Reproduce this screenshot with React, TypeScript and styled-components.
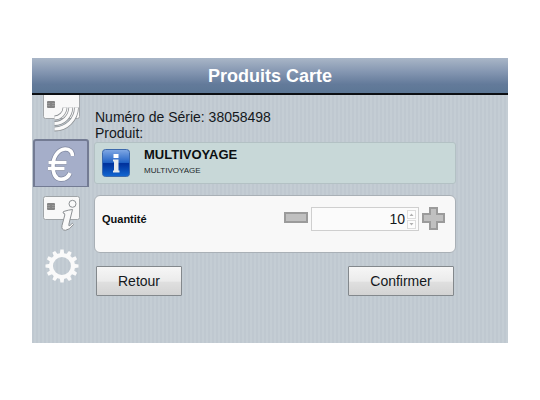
import React, { useState } from "react";
import styled, { createGlobalStyle } from "styled-components";

const GlobalStyle = createGlobalStyle`
  *, *::before, *::after { box-sizing: border-box; }
  body {
    margin: 0;
    background: #ffffff;
    color: #14181c;
    font-family: "Liberation Sans", Arial, sans-serif;
    font-size: 14px;
  }
  button, input { font: inherit; color: inherit; }
`;

const Screen = styled.div`
  margin: 58px 32px;
  background: repeating-linear-gradient(90deg, #bfc8d0 0 2px, #c4cdd4 2px 4px);
`;

const Header = styled.header`
  display: flex;
  align-items: center;
  justify-content: center;
  height: 37px;
  border-bottom: 2px solid #0b0e12;
  background: linear-gradient(#a9b6c7, #8496b1 40%, #637a9a 75%, #5c7795);
`;

const Title = styled.h1`
  margin: 0;
  color: #ffffff;
  font-size: 18px;
  line-height: 20px;
  font-weight: bold;
`;

const Body = styled.div`
  display: flex;
  min-height: 248px;
`;

const Sidebar = styled.nav`
  flex: none;
  width: 58px;
  display: flex;
  flex-direction: column;
`;

const Tab = styled.button<{ $active?: boolean; $height: number }>`
  display: flex;
  flex: none;
  align-items: center;
  justify-content: center;
  width: 56px;
  height: ${(p) => p.$height}px;
  margin: 0 0 0 1px;
  padding: 0 0 0 ${(p) => (p.$active ? 0 : 2)}px;
  border: ${(p) => (p.$active ? "2px solid #737b93" : "0")};
  border-bottom-width: ${(p) => (p.$active ? 1 : 0)}px;
  border-radius: 3px 3px 0 0;
  background: ${(p) => (p.$active ? "#a5aec9" : "transparent")};
`;

const Content = styled.main`
  flex: 1;
  min-width: 0;
  padding: 14px 52px 46px 4px;
`;

const Info = styled.p`
  margin: 0 0 0 1px;
  font-size: 14px;
  line-height: 16px;
`;

const Product = styled.section`
  display: flex;
  align-items: center;
  gap: 14px;
  height: 42px;
  margin-top: 1px;
  padding: 0 7px;
  border: 1px solid #b3c1c4;
  border-radius: 3px;
  background: #c8d8d8;
`;

const ProductName = styled.h2`
  margin: 0;
  color: #0c0f11;
  font-size: 13px;
  line-height: 16px;
  font-weight: bold;
`;

const ProductDetail = styled.p`
  margin: 0;
  color: #22282b;
  font-size: 8px;
  line-height: 16px;
`;

const QuantityCard = styled.section`
  display: flex;
  align-items: center;
  justify-content: space-between;
  height: 58px;
  margin-top: 11px;
  padding: 0 9px 10px 7px;
  border: 1px solid #a9b0b6;
  border-radius: 6px;
  background: #f8f8f8;
`;

const QuantityLabel = styled.label`
  color: #0c0f11;
  font-size: 11px;
  font-weight: bold;
`;

const Stepper = styled.div`
  display: flex;
  align-items: center;
  gap: 3px;
`;

const StepButton = styled.button`
  display: flex;
  padding: 0;
  border: 0;
  background: none;
`;

const Field = styled.div`
  display: flex;
  align-items: center;
  width: 108px;
  height: 24px;
  padding: 0 2px 0 0;
  border: 1px solid #cfcfcf;
  background: #fbfbfb;
`;

const QuantityInput = styled.input`
  flex: 1;
  min-width: 0;
  padding: 0 2px 0 0;
  border: 0;
  outline: 0;
  background: none;
  text-align: right;
  font-size: 14px;
  line-height: 20px;
`;

const Spinner = styled.div`
  display: flex;
  flex-direction: column;
  gap: 1px;
`;

const SpinButton = styled.button`
  display: flex;
  align-items: center;
  justify-content: center;
  width: 9px;
  height: 9px;
  padding: 0;
  border: 1px solid #dddddd;
  background: #fdfdfd;
`;

const Actions = styled.div`
  display: flex;
  justify-content: space-between;
  margin-top: 13px;
  padding: 0 2px;
`;

const ActionButton = styled.button<{ $wide?: boolean }>`
  width: ${(p) => (p.$wide ? 106 : 86)}px;
  height: 30px;
  padding: 0;
  border: 1px solid #83888c;
  border-radius: 1px;
  background: linear-gradient(#f6f6f6, #ebebeb 50%, #dfdfdf 55%, #d3d3d3);
  font-size: 14px;
`;

const Chip = ({ y }: { y: number }) => (
  <g>
    <rect x="4" y={y} width="8" height="7" rx="1" fill="#858585" />
    <path d={`M4 ${y + 2.5}h3M4 ${y + 4.5}h3M9 ${y + 2.5}h3M9 ${y + 4.5}h3`} stroke="#a5a5a5" strokeWidth="0.6" />
  </g>
);

const arcs = "M22 12.500A11 11 0 0 1 11.500 23M27.800 12.500A16.500 16.500 0 0 1 11.500 28.500M33.500 12.500A22 22 0 0 1 11.500 34";

const ContactlessIcon = () => (
  <svg width="38" height="44" viewBox="0 0 38 44" aria-hidden="true">
    <path d="M.5 0V21.500Q.5 23.500 2.500 23.500H34.500Q36.500 23.500 36.500 21.500V0" fill="#f8f8f8" stroke="#a2a6a9" />
    <Chip y={6} />
    <path d={arcs} fill="none" stroke="#8d9194" strokeWidth="4.8" />
    <path d={arcs} fill="none" stroke="#fafafa" strokeWidth="3.2" />
  </svg>
);

const EuroIcon = () => (
  <svg width="30" height="38" viewBox="0 0 30 38" aria-hidden="true">
    {[
      { color: "#7f879f", width: 5 },
      { color: "#ffffff", width: 3.6 },
    ].map((s) => (
      <path
        key={s.color}
        d="M26.500 11C26.500 6 23 3.800 19 4C12 4.500 7 12 7 21C7 29.500 10 34 15 34.200C19.500 34.200 22.500 32 24 28M2.500 17.500H20.500M2 23.500H18.500"
        fill="none"
        stroke={s.color}
        strokeWidth={s.width}
      />
    ))}
  </svg>
);

const CardInfoIcon = () => (
  <svg width="38" height="36" viewBox="0 0 38 36" aria-hidden="true">
    <rect x=".5" y=".5" width="36" height="23" rx="2" fill="#f8f8f8" stroke="#9fa4a7" />
    <Chip y={7} />
    <circle cx="29.500" cy="7.800" r="3.500" fill="#fafafa" stroke="#8d9194" />
    <path
      d="M20.500 15.500Q26 13.800 29.500 13.500L25.800 28.500Q25.500 30.500 27 29.500L29.300 27.300L30.500 28.500Q26.500 34 22.500 34.300Q18 34.200 19 29.500L21.800 19Q22.200 17 20 17Z"
      fill="#fafafa"
      stroke="#8d9194"
    />
  </svg>
);

const GearIcon = () => (
  <svg width="34" height="34" viewBox="-17 -17 34 34" aria-hidden="true">
    <circle r="11" fill="none" stroke="#fafafa" strokeWidth="4" />
    {Array.from({ length: 12 }, (_, i) => (
      <path key={i} d="M-2.300 -11.500L-1.600 -16.500H1.600L2.300 -11.500Z" fill="#fafafa" transform={`rotate(${i * 30})`} />
    ))}
  </svg>
);

const InfoIcon = () => (
  <svg width="28" height="28" viewBox="0 0 28 28" aria-hidden="true">
    <defs>
      <linearGradient id="blue" x1="0" y1="0" x2="0" y2="1">
        <stop offset="0" stopColor="#82a9e4" />
        <stop offset="0.48" stopColor="#2263c6" />
        <stop offset="0.52" stopColor="#00309b" />
        <stop offset="1" stopColor="#1267d2" />
      </linearGradient>
    </defs>
    <rect x=".5" y=".5" width="27" height="27" rx="3" fill="url(#blue)" stroke="#3c69ac" />
    <rect x="11.500" y="5" width="5" height="4" fill="#ffffff" />
    <path d="M11 10.500H16.500V21.500H17.500V23.500H11V21.500H12V12.500H11Z" fill="#e8eaec" />
  </svg>
);

const MinusIcon = () => (
  <svg width="24" height="24" viewBox="0 0 24 24" aria-hidden="true">
    <rect x="1" y="6" width="22" height="9" fill="#c0c0c0" stroke="#9b9b9b" strokeWidth="2" />
  </svg>
);

const PlusIcon = () => (
  <svg width="24" height="24" viewBox="0 0 24 24" aria-hidden="true">
    <path d="M8 1H15V7H22V15H15V22H8V15H1V7H8Z" fill="#c0c0c0" stroke="#9b9b9b" strokeWidth="2" />
  </svg>
);

const Arrow = ({ down }: { down?: boolean }) => (
  <svg width="5" height="3" viewBox="0 0 5 3" aria-hidden="true">
    <path d={down ? "M0.500 0H4.500L2.500 2.500Z" : "M0.500 3H4.500L2.500 0.500Z"} fill="#b0b0b0" />
  </svg>
);

export default function App() {
  const [quantity, setQuantity] = useState(10);
  const step = (delta: number) => setQuantity((q) => Math.max(0, q + delta));

  return (
    <>
      <GlobalStyle />
      <Screen>
        <Header>
          <Title>Produits Carte</Title>
        </Header>
        <Body>
          <Sidebar>
            <Tab aria-label="Carte" $height={44}><ContactlessIcon /></Tab>
            <Tab aria-label="Produits" $height={48} $active><EuroIcon /></Tab>
            <Tab aria-label="Informations" $height={54}><CardInfoIcon /></Tab>
            <Tab aria-label="Configuration" $height={50}><GearIcon /></Tab>
          </Sidebar>
          <Content>
            <Info>Numéro de Série: 38058498</Info>
            <Info>Produit:</Info>
            <Product>
              <InfoIcon />
              <div>
                <ProductName>MULTIVOYAGE</ProductName>
                <ProductDetail>MULTIVOYAGE</ProductDetail>
              </div>
            </Product>
            <QuantityCard>
              <QuantityLabel htmlFor="quantity">Quantité</QuantityLabel>
              <Stepper>
                <StepButton aria-label="Diminuer" onClick={() => step(-1)}><MinusIcon /></StepButton>
                <Field>
                  <QuantityInput
                    id="quantity"
                    inputMode="numeric"
                    value={quantity}
                    onChange={(e) => setQuantity(Number(e.target.value) || 0)}
                  />
                  <Spinner>
                    <SpinButton aria-label="Plus" onClick={() => step(1)}><Arrow /></SpinButton>
                    <SpinButton aria-label="Moins" onClick={() => step(-1)}><Arrow down /></SpinButton>
                  </Spinner>
                </Field>
                <StepButton aria-label="Augmenter" onClick={() => step(1)}><PlusIcon /></StepButton>
              </Stepper>
            </QuantityCard>
            <Actions>
              <ActionButton>Retour</ActionButton>
              <ActionButton $wide>Confirmer</ActionButton>
            </Actions>
          </Content>
        </Body>
      </Screen>
    </>
  );
}
